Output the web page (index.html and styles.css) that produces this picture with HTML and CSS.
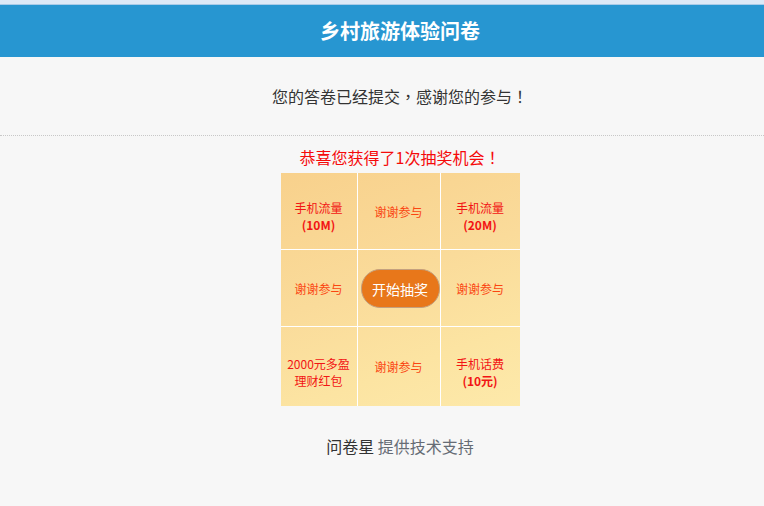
FILE: index.html
```html
<!DOCTYPE html>
<html lang="zh-CN">
<head>
<meta charset="utf-8">
<title>乡村旅游体验问卷</title>
<link rel="stylesheet" href="styles.css">
</head>
<body>
<div class="topstrip"></div>
<header class="header"><h1 class="title">乡村旅游体验问卷</h1></header>
<section class="thanks"><p>您的答卷已经提交<span class="punct" lang="zh-TW">，</span>感谢您的参与<span class="punct" lang="zh-TW">！</span></p></section>
<section class="lottery">
  <p class="congrats">恭喜您获得了1次抽奖机会<span class="punct" lang="zh-TW">！</span></p>
  <div class="board">
    <div class="cell c1 r1 prize"><span>手机流量<br><b>(10M)</b></span></div>
    <div class="cell c2 r1 thank"><span>谢谢参与</span></div>
    <div class="cell c3 r1 prize"><span>手机流量<br><b>(20M)</b></span></div>
    <div class="cell c1 r2 thank"><span>谢谢参与</span></div>
    <div class="cell c2 r2"><button class="start">开始抽奖</button></div>
    <div class="cell c3 r2 thank"><span>谢谢参与</span></div>
    <div class="cell c1 r3 prize"><span>2000元多盈<br>理财红包</span></div>
    <div class="cell c2 r3 thank"><span>谢谢参与</span></div>
    <div class="cell c3 r3 prize"><span>手机话费<br><b>(10元)</b></span></div>
  </div>
</section>
<footer class="footer"><span class="brand">问卷星</span> 提供技术支持</footer>
</body>
</html>
```
FILE: styles.css
```css
html, body {
  margin: 0;
  padding: 0;
}
body {
  background: #f7f7f7;
  font-family: "Noto Sans CJK SC", "Noto Sans", "Liberation Sans", sans-serif;
  color: #333;
}
.punct {
  font-family: "Noto Sans CJK TC", "Noto Sans CJK SC", sans-serif;
}
.topstrip {
  height: 4px;
  background: #dce9f7;
  border-bottom: 1px solid #a9cbe8;
}
.header {
  height: 52px;
  background: #2796d1;
  display: flex;
  align-items: center;
  justify-content: center;
  padding-left: 36px;
}
.title {
  margin: 0;
  color: #fff;
  font-size: 20px;
  font-weight: bold;
  line-height: 28px;
}
.thanks {
  height: 78px;
  display: flex;
  align-items: center;
  justify-content: center;
  padding-left: 36px;
  border-bottom: 1px dotted #c8c8c8;
}
.thanks p {
  margin: 0;
  font-size: 16px;
  line-height: 24px;
  color: #333;
}
.lottery {
  padding-top: 9px;
  padding-left: 36px;
  display: flex;
  flex-direction: column;
  align-items: center;
}
.congrats {
  margin: 0 0 4px;
  font-size: 16px;
  line-height: 24px;
  color: #f50a0a;
}
.board {
  display: grid;
  grid-template-columns: 77px 83px 79px;
  grid-template-rows: 77px 77px 79px;
  background: linear-gradient(160deg, #f8d18c 0%, #fadb9a 45%, #fce4a2 75%, #fde9aa 100%);
}
.cell {
  box-sizing: border-box;
  display: flex;
  align-items: center;
  justify-content: center;
  text-align: center;
  font-size: 12px;
  line-height: 17px;
}
.c1, .c2 { border-right: 1px solid #fff; }
.r1, .r2 { border-bottom: 1px solid #fff; }
.prize { color: #f21414; }
.prize span { padding-top: 10px; }
.prize b { font-weight: bold; font-size: 12px; }
.thank { color: #fa4612; }
.start {
  width: 79px;
  height: 39px;
  border-radius: 19px;
  border: 1px solid #c4a07e;
  background: #e8771a;
  color: #fff;
  font-family: "Noto Sans CJK SC", sans-serif;
  font-size: 14px;
  padding: 0;
  margin-left: 3px;
  margin-top: 1px;
  cursor: pointer;
}
.footer {
  margin-top: 28px;
  padding-left: 36px;
  text-align: center;
  font-size: 16px;
  line-height: 24px;
  color: #666c75;
}
.brand { color: #333; }
```
